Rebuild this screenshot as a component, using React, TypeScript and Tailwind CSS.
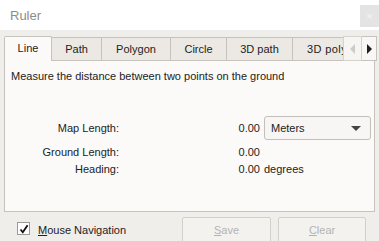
import React from "react";

const tabs = [
  { label: "Path", w: 50 },
  { label: "Polygon", w: 69 },
  { label: "Circle", w: 56 },
  { label: "3D path", w: 66 },
];

export default function App() {
  return (
    <div
      className="w-[379px] h-[241px] overflow-hidden bg-[#f0eeea] text-[11px] text-[#222222] flex flex-col"
      style={{ fontFamily: '"Liberation Sans", Arial, sans-serif' }}
    >
      {/* title bar */}
      <div className="h-[30px] bg-white flex items-start justify-between shrink-0">
        <div className="pl-[10px] pt-[6px] text-[13px] text-[#8c8c8c]">Ruler</div>
        <div className="mt-[5px] w-[19px] h-[22px] bg-[#e4e4e4] flex items-center justify-center text-[11px] text-[#f4f4f4]">
          ×
        </div>
      </div>

      {/* tabs */}
      <div className="pl-[4px] pt-[6px] flex items-end h-[30px] shrink-0 relative z-10">
        <div className="w-[48px] h-[25px] bg-[#fbfaf8] border border-b-0 border-[#c6c3bd] rounded-t-[2px] flex items-center justify-center -mb-px pb-[1px] shrink-0">
          Line
        </div>
        {tabs.map((t) => (
          <div
            key={t.label}
            style={{ width: t.w }}
            className="h-[23px] bg-[#ece9e4] border border-l-0 border-b-0 border-[#c6c3bd] flex items-center justify-center shrink-0"
          >
            {t.label}
          </div>
        ))}
        <div className="w-[50px] h-[23px] bg-[#ece9e4] border-t border-[#c6c3bd] overflow-hidden whitespace-nowrap pl-[14px] flex items-center shrink-0 tracking-[0.4px]">
          3D poly
        </div>
        <div className="flex items-stretch self-start h-[25px]">
          <div className="w-[19px] bg-[#f6f5f2] border border-[#d6d3ce] flex items-center justify-center">
            <span className="w-0 h-0 border-y-[5px] border-y-transparent border-r-[5px] border-r-[#cccccc]" />
          </div>
          <div className="w-[15px] bg-[#f8f7f5] border border-l-0 border-[#c6c3bd] flex items-center justify-center">
            <span className="w-0 h-0 border-y-[5px] border-y-transparent border-l-[5px] border-l-[#1e1e1e]" />
          </div>
        </div>
      </div>

      {/* panel */}
      <div className="mx-[4px] h-[152px] bg-[#fbfaf8] border border-[#c6c3bd] shrink-0 flex flex-col">
        <div className="pl-[6px] pt-[7px] h-[22px]">Measure the distance between two points on the ground</div>
        <div className="mt-[33px] flex items-center h-[24px]">
          <div className="w-[114px] text-right">Map Length:</div>
          <div className="w-[141px] text-right">0.00</div>
          <div className="ml-[4px] w-[107px] h-[24px] bg-[#f7f6f4] border border-[#c3c0bb] rounded-[3px] flex items-center justify-between pl-[6px] pr-[9px]">
            <span>Meters</span>
            <span className="w-0 h-0 border-x-[5px] border-x-transparent border-t-[5px] border-t-[#444]" />
          </div>
        </div>
        <div className="mt-[4px] flex items-center h-[16px]">
          <div className="w-[114px] text-right">Ground Length:</div>
          <div className="w-[141px] text-right">0.00</div>
        </div>
        <div className="mt-[1px] flex items-center h-[16px]">
          <div className="w-[114px] text-right">Heading:</div>
          <div className="w-[141px] text-right">0.00</div>
          <div className="ml-[4px]">degrees</div>
        </div>
      </div>

      {/* bottom */}
      <div className="flex items-start pt-[5px]">
        <div className="ml-[17px] mt-[5px] w-[13px] h-[13px] bg-white border border-[#9a9a9a] flex items-center justify-center">
          <svg width="10" height="10" viewBox="0 0 10 10">
            <path d="M1.5 5.5 L3.8 8.3 L8.6 1.2" stroke="#111" strokeWidth="1.8" fill="none" />
          </svg>
        </div>
        <div className="ml-[8px] mt-[5px]">
          <span className="underline">M</span>ouse Navigation
        </div>
        <div className="ml-[56px] w-[89px] h-[26px] bg-[#f3f2ef] border border-[#d3d0cb] rounded-[2px] flex items-center justify-center text-[#b5b3af]">
          <span><span className="underline">S</span>ave</span>
        </div>
        <div className="ml-[7px] w-[88px] h-[26px] bg-[#f3f2ef] border border-[#d3d0cb] rounded-[2px] flex items-center justify-center text-[#b5b3af]">
          <span><span className="underline">C</span>lear</span>
        </div>
      </div>
    </div>
  );
}
